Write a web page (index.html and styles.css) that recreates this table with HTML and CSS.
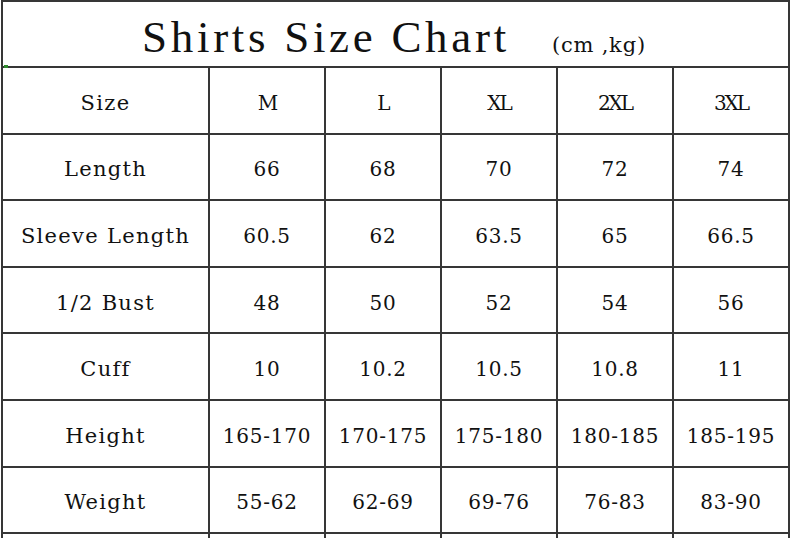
FILE: index.html
```html
<!DOCTYPE html>
<html>
<head>
<meta charset="utf-8">
<link rel="stylesheet" href="styles.css">
</head>
<body>
<div class="page">
  <div class="chart">
    <div class="title"><span class="title-main">Shirts Size Chart</span><span class="title-unit">(cm ,kg)</span></div>
    <div class="cell label">Size</div>
    <div class="cell size">M</div>
    <div class="cell size">L</div>
    <div class="cell size">XL</div>
    <div class="cell size">2XL</div>
    <div class="cell size">3XL</div>

    <div class="cell label">Length</div>
    <div class="cell num">66</div>
    <div class="cell num">68</div>
    <div class="cell num">70</div>
    <div class="cell num">72</div>
    <div class="cell num">74</div>

    <div class="cell label">Sleeve Length</div>
    <div class="cell num">60.5</div>
    <div class="cell num">62</div>
    <div class="cell num">63.5</div>
    <div class="cell num">65</div>
    <div class="cell num">66.5</div>

    <div class="cell label">1/2 Bust</div>
    <div class="cell num">48</div>
    <div class="cell num">50</div>
    <div class="cell num">52</div>
    <div class="cell num">54</div>
    <div class="cell num">56</div>

    <div class="cell label">Cuff</div>
    <div class="cell num">10</div>
    <div class="cell num">10.2</div>
    <div class="cell num">10.5</div>
    <div class="cell num">10.8</div>
    <div class="cell num">11</div>

    <div class="cell label">Height</div>
    <div class="cell num">165-170</div>
    <div class="cell num">170-175</div>
    <div class="cell num">175-180</div>
    <div class="cell num">180-185</div>
    <div class="cell num">185-195</div>

    <div class="cell label">Weight</div>
    <div class="cell num">55-62</div>
    <div class="cell num">62-69</div>
    <div class="cell num">69-76</div>
    <div class="cell num">76-83</div>
    <div class="cell num">83-90</div>

    <div class="cell"></div>
    <div class="cell"></div>
    <div class="cell"></div>
    <div class="cell"></div>
    <div class="cell"></div>
    <div class="cell"></div>
    <span class="mark"></span>
  </div>
</div>
</body>
</html>
```

FILE: styles.css
```css
html, body {
  margin: 0;
  padding: 0;
  background: #ffffff;
}

.page {
  width: 790px;
  height: 538px;
  overflow: hidden;
  background: #ffffff;
}

.chart {
  position: relative;
  margin-left: 1px;
  width: 789px;
  box-sizing: border-box;
  display: grid;
  grid-template-columns: 205px repeat(5, 114px);
  grid-template-rows: 64px repeat(7, 64.6px) 40px;
  gap: 2px;
  padding: 2px 2px 0 2px;
  background: #363636;
  font-family: "DejaVu Serif", "Liberation Serif", serif;
  color: #111111;
}

.title {
  grid-column: 1 / -1;
  background: #ffffff;
  display: flex;
  align-items: baseline;
  padding-left: 139px;
  box-sizing: border-box;
  line-height: 64px;
}

.title-main {
  font-family: "Liberation Serif", serif;
  font-size: 45px;
  letter-spacing: 3.7px;
  position: relative;
  top: 3px;
}

.title-unit {
  font-size: 21px;
  letter-spacing: 0.8px;
  margin-left: 42px;
  position: relative;
  top: 3px;
}

.cell {
  background: #ffffff;
  display: flex;
  align-items: center;
  justify-content: center;
  padding-top: 5px;
  box-sizing: border-box;
  white-space: nowrap;
}

.label {
  font-size: 21px;
  letter-spacing: 1.3px;
}

.size {
  font-size: 20px;
  letter-spacing: -2px;
}

.num {
  font-size: 20px;
  letter-spacing: 0.8px;
}

.mark {
  position: absolute;
  left: 3px;
  top: 65px;
  width: 4px;
  height: 3px;
  background: #2e8b2e;
}
```
